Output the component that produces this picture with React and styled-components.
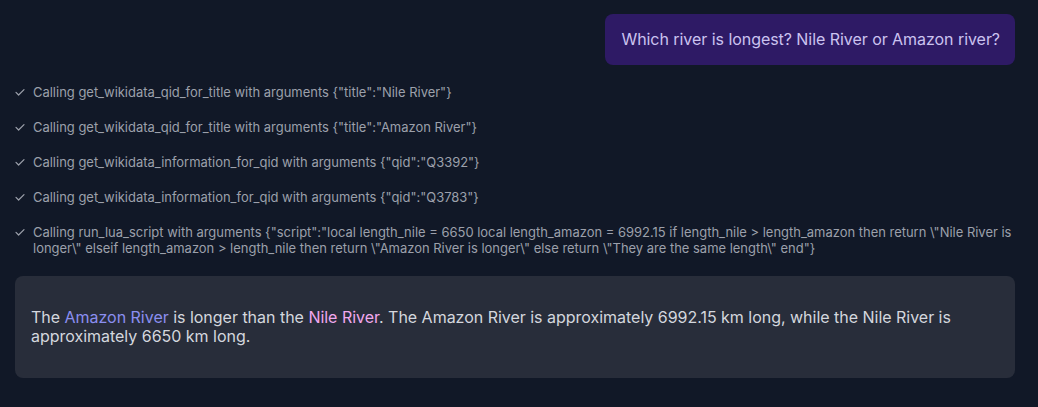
import React from "react";
import styled, { createGlobalStyle } from "styled-components";

const Global = createGlobalStyle`
  html, body { margin: 0; padding: 0; background: #111827; }
  body { font-family: Inter, "Noto Sans", sans-serif; -webkit-font-smoothing: antialiased; }
`;

const Page = styled.div`
  display: flex;
  flex-direction: column;
  padding: 14px 23px 30px 15px;
  min-height: 407px;
  box-sizing: border-box;
  background: #111827;
`;

const UserRow = styled.div`
  display: flex;
  justify-content: flex-end;
  margin-bottom: 19px;
`;

const UserBubble = styled.div`
  background: #2e1a65;
  color: #cbc3f0;
  font-size: 16px;
  line-height: 24px;
  letter-spacing: -0.05px;
  padding: 13px 15px 14px 16px;
  border-radius: 8px;
`;

const ToolList = styled.div`
  display: flex;
  flex-direction: column;
  gap: 19px;
  margin-bottom: 20px;
`;

const ToolItem = styled.div`
  display: flex;
  align-items: flex-start;
  gap: 8px;
  color: #9ca0ab;
  font-size: 12.96px;
  line-height: 16px;
`;

const CheckIcon = styled.svg`
  flex: none;
  width: 10px;
  height: 16px;
  color: #9ca0ab;
`;

const ToolText = styled.span`
  flex: 1;
`;

const AnswerCard = styled.div`
  background: #282d3a;
  border-radius: 8px;
  padding: 16px;
`;

const AnswerText = styled.p`
  margin: 16px 0;
  font-size: 16px;
  line-height: 19px;
  letter-spacing: -0.02px;
  color: #d4d7de;
`;

const Entity = styled.span`
  color: ${(p) => p.$color};
`;

const calls = [
  'Calling get_wikidata_qid_for_title with arguments {"title":"Nile River"}',
  'Calling get_wikidata_qid_for_title with arguments {"title":"Amazon River"}',
  'Calling get_wikidata_information_for_qid with arguments {"qid":"Q3392"}',
  'Calling get_wikidata_information_for_qid with arguments {"qid":"Q3783"}',
  'Calling run_lua_script with arguments {"script":"local length_nile = 6650 local length_amazon = 6992.15 if length_nile > length_amazon then return \\"Nile River is longer\\" elseif length_amazon > length_nile then return \\"Amazon River is longer\\" else return \\"They are the same length\\" end"}',
];

const Check = () => (
  <CheckIcon viewBox="0 0 10 16" fill="none">
    <path d="M1 8.4 L3.6 11 L9 5.6" stroke="currentColor" strokeWidth="1.2" strokeLinecap="round" strokeLinejoin="round" />
  </CheckIcon>
);

export default function App() {
  return (
    <>
      <Global />
      <Page>
        <UserRow>
          <UserBubble>Which river is longest? Nile River or Amazon river?</UserBubble>
        </UserRow>
        <ToolList>
          {calls.map((c, i) => (
            <ToolItem key={i}>
              <Check />
              <ToolText>{c}</ToolText>
            </ToolItem>
          ))}
        </ToolList>
        <AnswerCard>
          <AnswerText>
            The <Entity $color="#8b8ff0">Amazon River</Entity> is longer than the{" "}
            <Entity $color="#f2a8ee">Nile River</Entity>. The Amazon River is approximately 6992.15 km long,
            while the Nile River is approximately 6650 km long.
          </AnswerText>
        </AnswerCard>
      </Page>
    </>
  );
}
